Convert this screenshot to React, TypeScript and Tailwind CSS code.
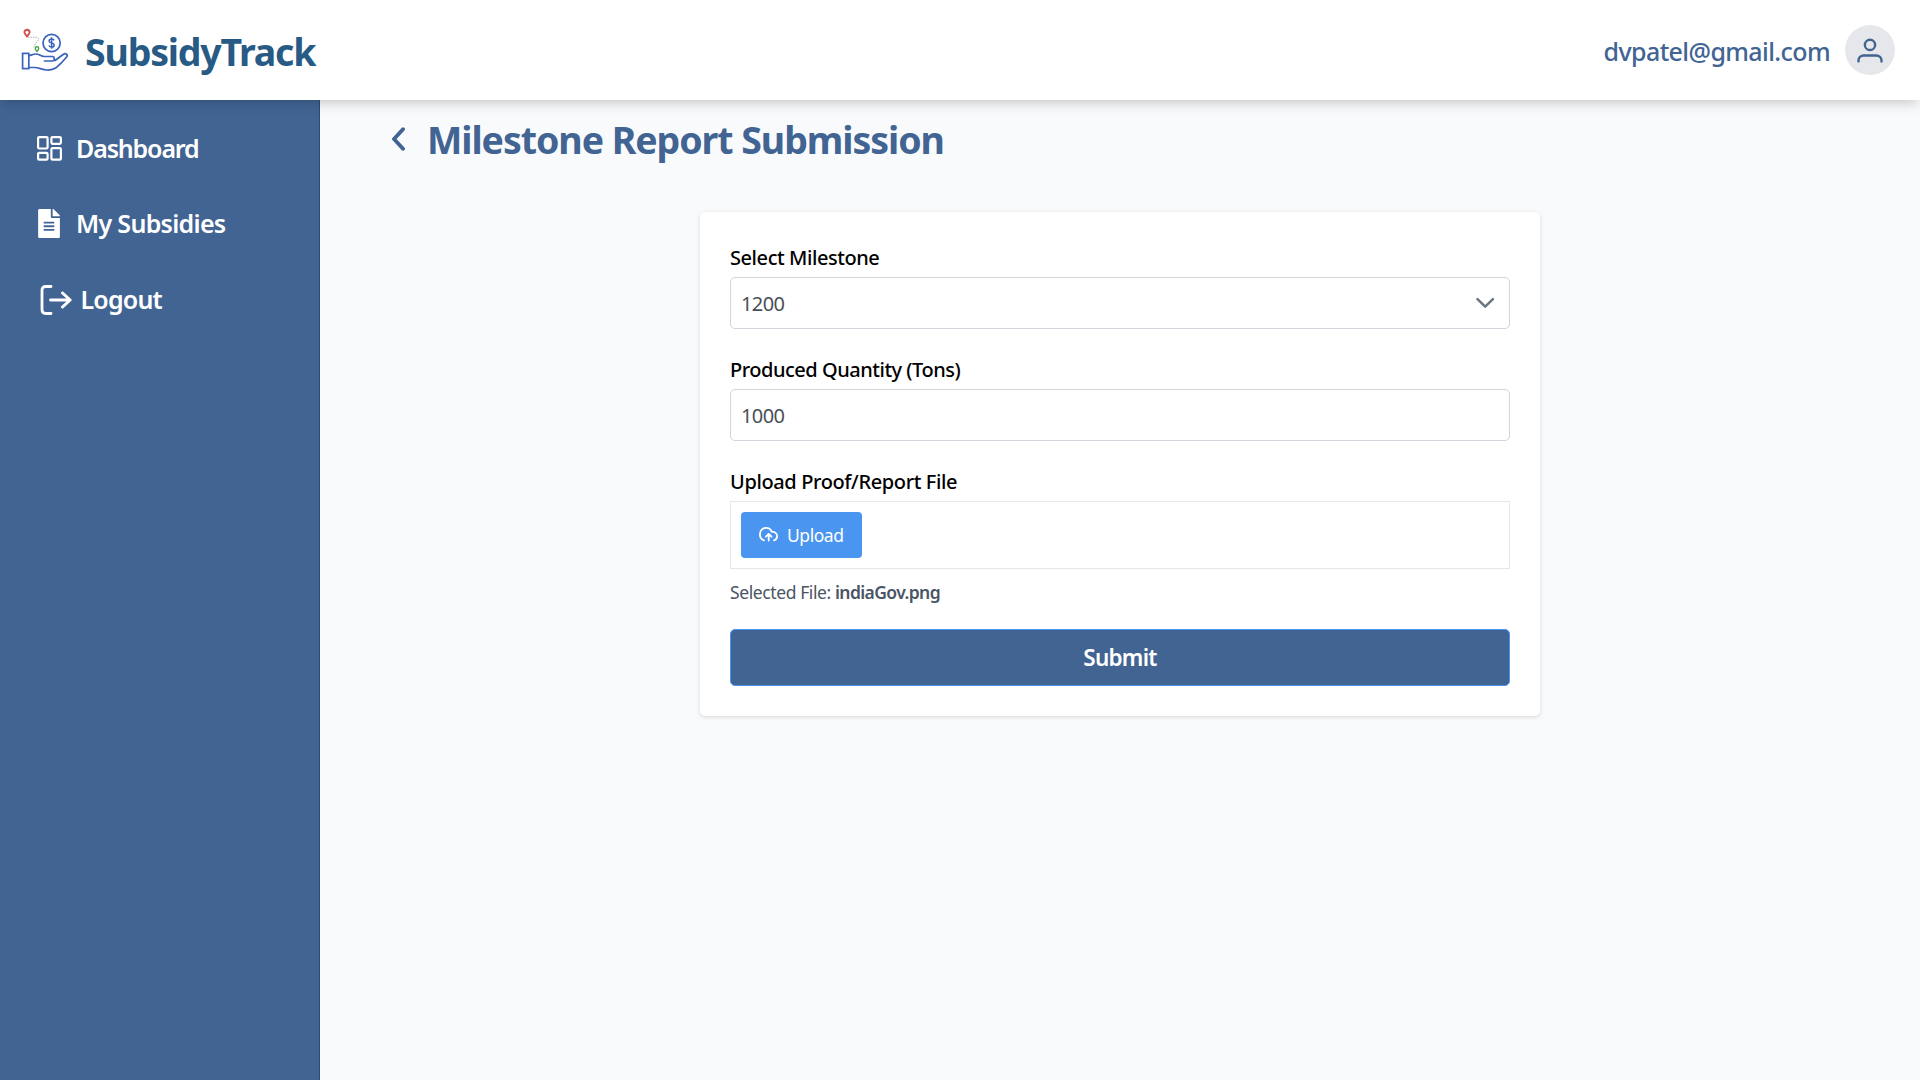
import type { ReactNode } from "react";
import { FaFileAlt } from "react-icons/fa";

function LogoIcon() {
  return (
    <svg width="50" height="46" viewBox="20 27 50 46" fill="none" className="shrink-0">
      <path d="M27 36.500c-1.400-1.800-2.600-2.900-2.600-4.200a2.600 2.600 0 1 1 5.200 0C29.600 33.600 28.400 34.700 27 36.500z" stroke="#d0504e" strokeWidth="1.900" />
      <path d="M28 37.300h9l2 2-4 5-1.500 4" stroke="#9aa0a6" strokeWidth="0.800" strokeDasharray="1.500 1" />
      <path d="M37 51.500c-1-1.200-1.700-2-1.700-3a1.700 1.700 0 1 1 3.400 0C38.700 49.500 38 50.300 37 51.500z" stroke="#4aa546" strokeWidth="1.400" />
      <circle cx="51.600" cy="43" r="8.600" stroke="#3b62bd" strokeWidth="1.700" />
      <path d="M54.100 40.400c-.4-1-1.300-1.500-2.500-1.500-1.500 0-2.500.8-2.500 2 0 2.800 5.100 1.300 5.100 4.100 0 1.300-1.100 2.100-2.600 2.100-1.300 0-2.300-.6-2.700-1.600M51.600 37.200v11.600" stroke="#3b62bd" strokeWidth="1.500" />
      <rect x="22.600" y="53.400" width="6.200" height="15.200" stroke="#3b62bd" strokeWidth="1.700" />
      <path d="M28.800 55.600c2.500-.4 4.500-1.600 7-1.600 3.500 0 5 2.300 8.200 2.500h8.500c2.300 0 2.500 4.500 0 4.500h-8M55 60.500l8.500-6.300c2.200-1.300 4.700.6 3.300 2.600-3.500 4.300-7 8-10.800 11-2.500 1.800-5.500 2.400-9 2.200-5-.3-8.500-2.500-12.500-2.500h-5.700" stroke="#3b62bd" strokeWidth="1.700" strokeLinejoin="round" strokeLinecap="round" />
    </svg>
  );
}

function DashboardIcon() {
  return (
    <svg width="25" height="25" viewBox="0 0 25 25" fill="none" stroke="white" strokeWidth="2.200" className="shrink-0">
      <rect x="1.100" y="1.100" width="9.500" height="11.400" rx="1.200" />
      <rect x="14.400" y="1.100" width="9.500" height="6.700" rx="1.200" />
      <rect x="1.100" y="16.900" width="9.500" height="6.700" rx="1.200" />
      <rect x="14.400" y="12.200" width="9.500" height="11.400" rx="1.200" />
    </svg>
  );
}

function SignOutIcon() {
  return (
    <svg width="32" height="30" viewBox="0 0 32 30" fill="none" stroke="white" strokeWidth="2.800" strokeLinecap="round" strokeLinejoin="round" className="shrink-0">
      <path d="M11 1.500H5.700c-2.400 0-3.700 1.300-3.700 3.700v19.600c0 2.400 1.300 3.700 3.700 3.700H11" />
      <path d="M10.500 15h19.700M22.400 7.900l7.800 7.100-7.800 7.100" />
    </svg>
  );
}

function UserIcon() {
  return (
    <svg width="26" height="25" viewBox="0 0 26 25" fill="none" stroke="#416493" strokeWidth="2.400" strokeLinecap="round">
      <circle cx="13" cy="6.900" r="5.100" />
      <path d="M1.500 23.400v-1c0-3 2.300-4.900 5.300-4.900h12.400c3 0 5.300 1.900 5.300 4.900v1" />
    </svg>
  );
}

function CloudUploadIcon() {
  return (
    <svg width="19" height="15" viewBox="0 0 19 15" fill="none" stroke="white" strokeWidth="1.800" strokeLinecap="round" strokeLinejoin="round" className="mb-[2px]">
      <path d="M5 13.300C2.400 12.600.9 10.500.9 7.300.9 3.600 3.600.9 7 .9c2.700 0 4.900 1.500 5.700 3.800 3 0 5.400 1.700 5.400 4.500 0 2.100-1.200 3.600-3.100 4.100" />
      <path d="M9.700 13.500V7.300M6.900 9.700l2.800-2.700 2.800 2.700" />
    </svg>
  );
}

function Field({ label, children }: { label: ReactNode; children: ReactNode }) {
  return (
    <div className="mb-[25px] flex flex-col">
      <label className="mb-[5px] h-[30px] pt-px text-[20px] font-medium leading-[30px] text-black">{label}</label>
      {children}
    </div>
  );
}

export default function App() {
  return (
    <div className="flex h-[1080px] w-full flex-col overflow-hidden bg-[#f9fafc] font-['Noto_Sans','Open_Sans',sans-serif]">
      <header className="relative z-10 flex h-[100px] shrink-0 items-center justify-between bg-white pl-5 pr-[25px] shadow-[0_5px_12px_-2px_rgba(0,0,0,0.2)]">
        <div className="flex items-center">
          <LogoIcon />
          <div className="ml-[15px] pt-[3px] text-[37.5px] font-bold leading-[45px] tracking-[-1.2px] text-[#275a84]">
            SubsidyTrack
          </div>
        </div>
        <div className="flex items-center gap-[15px]">
          <span className="pt-[2px] text-[25px] font-medium leading-[30px] tracking-[-0.6px] text-[#416493]">dvpatel@gmail.com</span>
          <div className="flex size-[50px] items-center justify-center rounded-full bg-gray-200">
            <UserIcon />
          </div>
        </div>
      </header>

      <div className="flex min-h-0 flex-1">
        <aside className="flex w-[320px] shrink-0 flex-col border-r border-[#2d4a75] bg-[#416493] pt-[11px] text-[25px] font-[560] text-white">
          <a className="flex h-[75px] items-center pl-[37px]">
            <DashboardIcon />
            <span className="ml-[14px] tracking-[-1.15px]">Dashboard</span>
          </a>
          <a className="flex h-[75px] items-center pl-[38px]">
            <FaFileAlt className="h-[29px] w-[22px] shrink-0" />
            <span className="ml-[16px] tracking-[-0.7px]">My Subsidies</span>
          </a>
          <a className="flex h-[77px] items-center pl-[40px]">
            <SignOutIcon />
            <span className="ml-[8.500px] tracking-[-0.8px]">Logout</span>
          </a>
        </aside>

        <main className="flex flex-1 flex-col">
          <div className="flex h-[112px] items-start pl-[68px] pt-[15px]">
            <svg width="14" height="24" viewBox="0 0 14 24" fill="none" stroke="#416493" strokeWidth="3.900" strokeLinecap="round" strokeLinejoin="round" className="ml-[3px] mt-[12px]">
              <path d="M12 2.200 3 12l9 9.800" />
            </svg>
            <h1 className="ml-[22px] text-[37.5px] font-bold leading-[50px] tracking-[-1.05px] text-[#416493]">Milestone Report Submission</h1>
          </div>

          <form className="mx-auto flex h-[504px] w-[840px] flex-col rounded-[5px] bg-white px-[30px] pt-[30px] shadow-[0_1px_4px_rgba(0,0,0,0.14)]">
            <Field label={<span className="tracking-[-0.43px]">Select Milestone</span>}>
              <div className="flex h-[52px] items-center justify-between rounded-[5px] border border-gray-300 pl-[10px] pr-[14px]">
                <span className="pt-px text-[20px] tracking-[-0.6px] text-[#495057]">1200</span>
                <svg width="19" height="12" viewBox="0 0 19 12" fill="none" stroke="#6c757d" strokeWidth="2.500" strokeLinecap="round" strokeLinejoin="round">
                  <path d="M1.500 2.200 9.200 9.700l7.700-7.500" />
                </svg>
              </div>
            </Field>
            <Field label={<span className="tracking-[-0.48px]">Produced Quantity (Tons)</span>}>
              <div className="flex h-[52px] items-center rounded-[5px] border border-gray-300 pl-[10px]">
                <span className="pt-px text-[20px] tracking-[-0.6px] text-[#495057]">1000</span>
              </div>
            </Field>
            <div className="flex flex-col">
              <label className="mb-[5px] h-[30px] pt-px text-[20px] font-medium leading-[30px] tracking-[-0.38px] text-black">Upload Proof/Report File</label>
              <div className="flex h-[68px] items-center border border-gray-200 pl-[10px]">
                <button type="button" className="flex h-[46px] w-[121px] items-center rounded-[4px] bg-[#4a95ef] pl-[18px] text-[17.5px] text-white">
                  <CloudUploadIcon />
                  <span className="ml-[9px] tracking-[-0.45px]">Upload</span>
                </button>
              </div>
            </div>
            <p className="mt-[11px] h-[24px] text-[17.5px] leading-[25px] tracking-[-0.4px] text-gray-600">
              Selected File: <span className="font-semibold tracking-[-0.6px]">indiaGov.png</span>
            </p>
            <button type="button" className="mt-[25px] flex h-[57px] items-center justify-center rounded-[5px] border border-[#4a95ef] bg-[#416493] pt-px text-[22.5px] font-semibold tracking-[-0.75px] text-white">
              Submit
            </button>
          </form>
        </main>
      </div>
    </div>
  );
}
